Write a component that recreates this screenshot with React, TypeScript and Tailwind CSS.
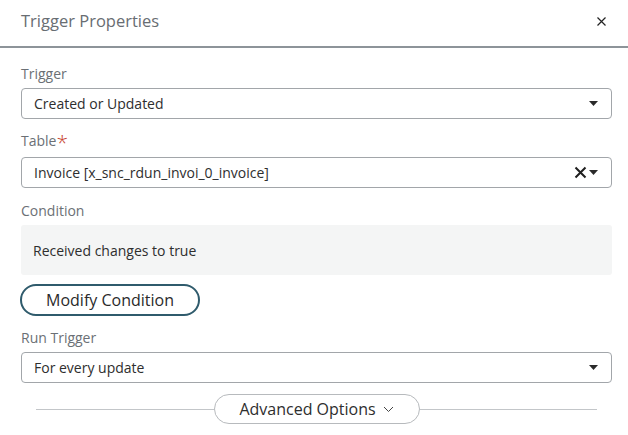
import React from "react";

const font = { fontFamily: "'Open Sans', 'Noto Sans', sans-serif" };

function Caret() {
  return (
    <svg width="9" height="5" viewBox="0 0 9 5" className="shrink-0">
      <path d="M0 0 L9 0 L4.5 5 Z" fill="#2a2a2a" />
    </svg>
  );
}

function Select({ value, clearable }: { value: string; clearable?: boolean }) {
  return (
    <div className="mt-1 h-[31px] rounded-[4px] border border-[#a2a6aa] bg-white flex items-center pl-3 pr-[13px]">
      <span className="flex-1 text-[14px] text-[#2e2e2e] leading-5">{value}</span>
      {clearable && (
        <svg width="13" height="13" viewBox="0 0 13 13" className="mr-[2px]">
          <path d="M1.5 1.5 L11.5 11.5 M11.5 1.5 L1.5 11.5" stroke="#1f1f1f" strokeWidth="2" />
        </svg>
      )}
      <Caret />
    </div>
  );
}

function Label({ children, className = "" }: { children: React.ReactNode; className?: string }) {
  return <div className={`text-[14px] leading-5 text-[#6b7075] ${className}`}>{children}</div>;
}

export default function App() {
  return (
    <div className="w-[628px] h-[435px] bg-white overflow-hidden" style={font}>
      <header className="h-[48px] border-b-2 border-[#8d9499] flex items-start pt-[9px] pl-[21px] pr-[22px]">
        <h1 className="flex-1 text-[16.5px] leading-6 text-[#686d72]">Trigger Properties</h1>
        <button className="mt-[8px]">
          <svg width="9" height="9" viewBox="0 0 9 9">
            <path d="M0.5 0.5 L8.5 8.5 M8.5 0.5 L0.5 8.5" stroke="#222" strokeWidth="1.2" />
          </svg>
        </button>
      </header>
      <div className="pl-[21px] pr-[16px] flex flex-col">
        <Label className="mt-[16px]">Trigger</Label>
        <Select value="Created or Updated" />
        <Label className="mt-[12px]">
          Table<span className="text-[#c8442f] text-[21px] font-light leading-none align-[-4px]">*</span>
        </Label>
        <Select value="Invoice [x_snc_rdun_invoi_0_invoice]" clearable />
        <Label className="mt-[13px]">Condition</Label>
        <div className="mt-1 h-[50px] bg-[#f4f5f5] rounded-[3px] flex items-center px-3 text-[14px] text-[#2e2e2e]">
          Received changes to true
        </div>
        <button className="mt-[9px] -ml-[1px] w-[180px] h-[32px] rounded-full border-2 border-[#2f5b6c] text-[16px] text-[#2a2a2a] flex items-center justify-center">
          Modify Condition
        </button>
        <Label className="mt-[12px]">Run Trigger</Label>
        <Select value="For every update" />
        <div className="mt-[11px] mx-[15px] flex items-center">
          <div className="flex-1 h-px bg-[#c3c6c9]" />
          <button className="w-[206px] h-[30px] rounded-full border border-[#b7babd] flex items-center justify-center gap-[7px] text-[16px] text-[#2e2e2e]">
            Advanced Options
            <svg width="11" height="7" viewBox="0 0 11 7">
              <path d="M1 1 L5.5 5.5 L10 1" stroke="#444" strokeWidth="1" fill="none" />
            </svg>
          </button>
          <div className="flex-1 h-px bg-[#c3c6c9]" />
        </div>
      </div>
    </div>
  );
}
